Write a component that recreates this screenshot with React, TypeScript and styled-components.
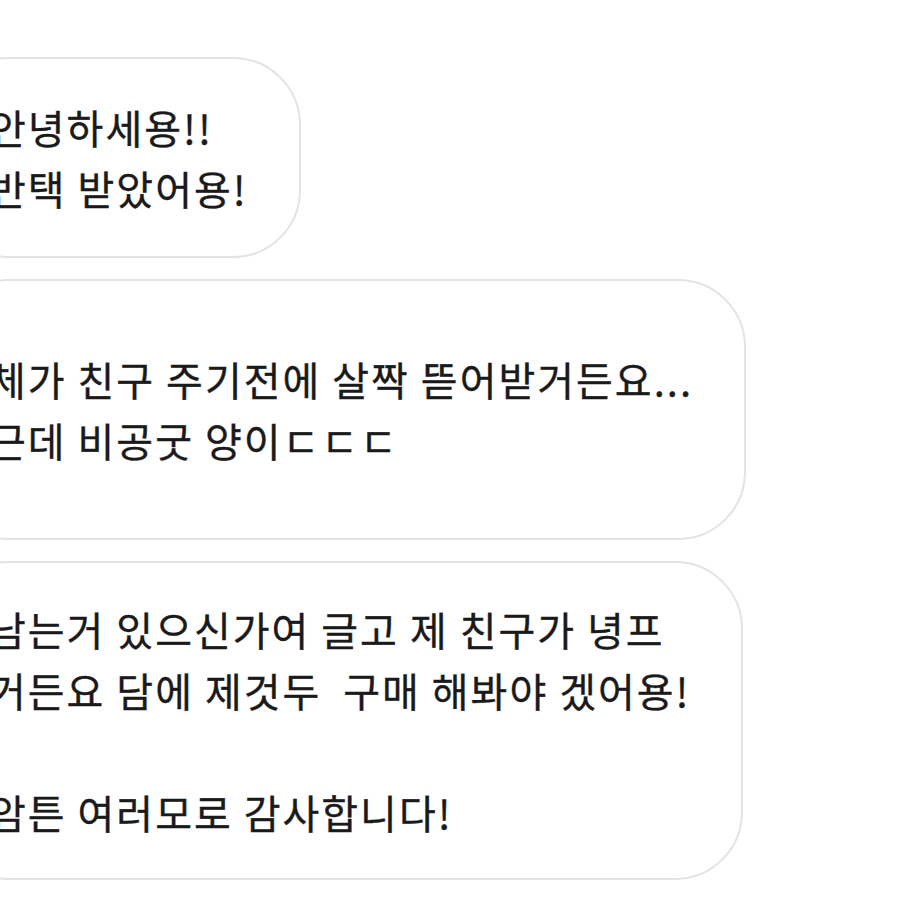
import React from "react";
import styled, { createGlobalStyle } from "styled-components";

const Global = createGlobalStyle`
  html, body {
    margin: 0;
    padding: 0;
    background: #ffffff;
    overflow: hidden;
  }
  body {
    font-family: "Noto Sans CJK KR", "Noto Sans", sans-serif;
  }
`;

const Thread = styled.div`
  display: flex;
  flex-direction: column;
  align-items: flex-start;
  gap: 21px;
  padding-top: 57px;
  width: 920px;
  height: 920px;
  box-sizing: border-box;
  overflow: hidden;
`;

const Bubble = styled.div<{ $padY: number }>`
  box-sizing: border-box;
  width: fit-content;
  margin-left: -60px;
  padding: ${(p) => p.$padY}px 51px ${(p) => p.$padY - 1}px 47px;
  background: #ffffff;
  border: 2px solid #e3e3e3;
  border-radius: 68px;
  color: #1a1a1a;
  font-family: "Noto Sans CJK KR", "Noto Sans", sans-serif;
  font-size: 40px;
  font-weight: 400;
  letter-spacing: 2px;
  line-height: 61px;
  white-space: pre;
  -webkit-text-stroke: 0.35px #1a1a1a;
`;

const Line = styled.div`
  min-height: 61px;
`;

const messages: { lines: string[]; padY: number }[] = [
  { lines: ["안녕하세용!!", "반택 받았어용!"], padY: 38 },
  { lines: ["체가 친구 주기전에 살짝 뜯어받거든요...", "근데 비공굿 양이ㄷㄷㄷ"], padY: 68 },
  {
    lines: [
      "남는거 있으신가여 글고 제 친구가 녕프",
      "거든요 담에 제것두  구매 해봐야 겠어용!",
      "",
      "암튼 여러모로 감사합니다!",
    ],
    padY: 36,
  },
];

export default function App() {
  return (
    <>
      <Global />
      <Thread>
        {messages.map((m, i) => (
          <Bubble key={i} $padY={m.padY}>
            {m.lines.map((l, j) => (
              <Line key={j}>{l}</Line>
            ))}
          </Bubble>
        ))}
      </Thread>
    </>
  );
}
